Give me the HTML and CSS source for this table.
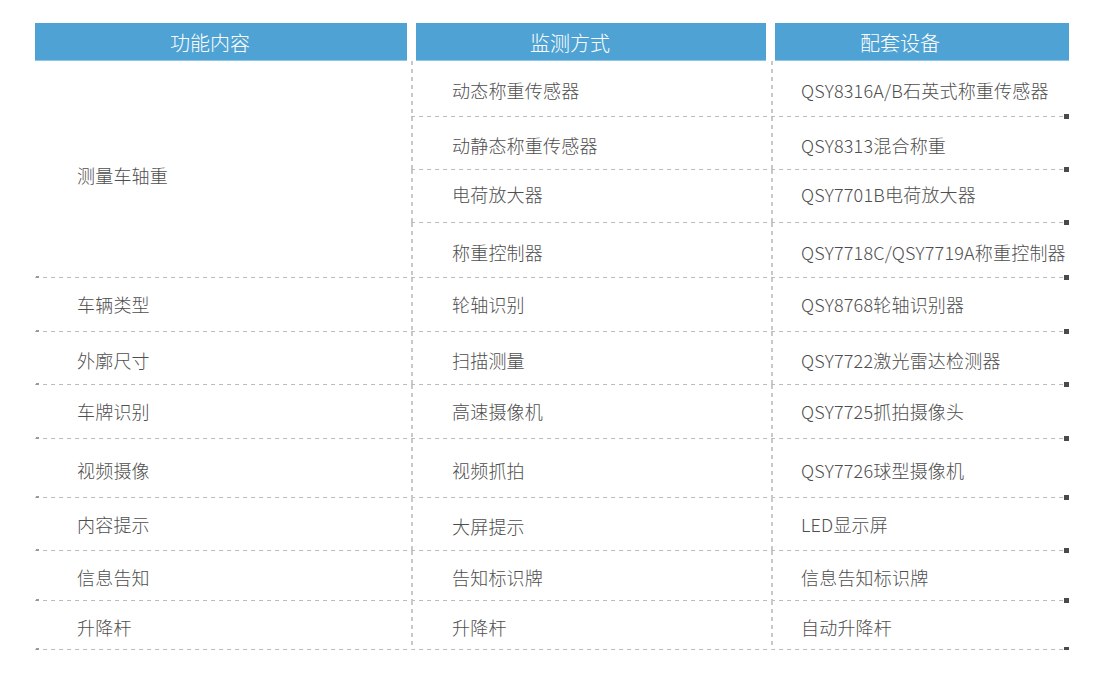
FILE: index.html
```html
<!DOCTYPE html>
<html lang="zh-CN">
<head>
<meta charset="utf-8">
<title>功能内容</title>
<link rel="stylesheet" href="styles.css">
</head>
<body>
<div class="wrap">
  <div class="head">
    <div class="th th1">功能内容</div>
    <div class="th th2">监测方式</div>
    <div class="th th3">配套设备</div>
  </div>
  <div class="grid">
    <div class="c c1 span4">测量车轴重</div>
    <div class="c c2">动态称重传感器</div>
    <div class="c c3">QSY8316A/B石英式称重传感器</div>
    <div class="c c2">动静态称重传感器</div>
    <div class="c c3">QSY8313混合称重</div>
    <div class="c c2 lift4">电荷放大器</div>
    <div class="c c3 lift4">QSY7701B电荷放大器</div>
    <div class="c c2">称重控制器</div>
    <div class="c c3">QSY7718C/QSY7719A称重控制器</div>

    <div class="c c1 lift2">车辆类型</div>
    <div class="c c2 lift2">轮轴识别</div>
    <div class="c c3 lift2">QSY8768轮轴识别器</div>

    <div class="c c1">外廓尺寸</div>
    <div class="c c2">扫描测量</div>
    <div class="c c3">QSY7722激光雷达检测器</div>

    <div class="c c1 lift2">车牌识别</div>
    <div class="c c2 lift2">高速摄像机</div>
    <div class="c c3 lift2">QSY7725抓拍摄像头</div>

    <div class="c c1">视频摄像</div>
    <div class="c c2">视频抓拍</div>
    <div class="c c3">QSY7726球型摄像机</div>

    <div class="c c1 lift2">内容提示</div>
    <div class="c c2">大屏提示</div>
    <div class="c c3 lift2">LED显示屏</div>

    <div class="c c1">信息告知</div>
    <div class="c c2">告知标识牌</div>
    <div class="c c3">信息告知标识牌</div>

    <div class="c c1">升降杆</div>
    <div class="c c2">升降杆</div>
    <div class="c c3">自动升降杆</div>
  </div>
</div>
</body>
</html>
```

FILE: styles.css
```css
html, body {
  margin: 0;
  padding: 0;
  background: #ffffff;
}
body {
  font-family: "Noto Sans CJK SC", "Noto Sans", sans-serif;
}
.wrap {
  width: 1034px;
  margin: 23px 0 0 35px;
}
.head {
  display: flex;
  gap: 9px;
}
.th {
  box-sizing: border-box;
  height: 38px;
  line-height: 38px;
  padding-top: 1px;
  background: #4fa3d4;
  border-bottom: 1px solid #8fc6e6;
  color: #ffffff;
  font-size: 20px;
  font-weight: 300;
  text-align: center;
}
.th1 { width: 372px; padding-right: 22px; }
.th2 { width: 350px; padding-right: 42px; }
.th3 { width: 294px; padding-right: 44px; }

.grid {
  display: grid;
  grid-template-columns: 376px 360px 298px;
  grid-template-rows: 56px 53px 53px 55px 54px 53px 54px 59px 53px 50px 49px;
}
.c {
  position: relative;
  display: flex;
  align-items: center;
  padding-top: 2px;
  box-sizing: border-box;
  font-size: 18px;
  font-weight: 300;
  letter-spacing: 0.2px;
  color: #4e4e4e;
  background-image: repeating-linear-gradient(to right, #bcbcbc 0 4px, transparent 4px 8px);
  background-size: 100% 1px;
  background-position: left bottom;
  background-repeat: no-repeat;
}
.c1 {
  padding-left: 42px;
}
.span4 {
  grid-row: span 4;
  padding-top: 10px;
}
.c1::before {
  content: "";
  position: absolute;
  left: 1px;
  bottom: 0;
  width: 3px;
  height: 2px;
  background: #9a9a9a;
}
.c2, .c3 {
  background-image:
    repeating-linear-gradient(to bottom, #c9c9c9 0 4px, transparent 4px 8px),
    repeating-linear-gradient(to right, #bcbcbc 0 4px, transparent 4px 8px);
  background-size: 2px 100%, 100% 1px;
  background-position: left top, left bottom;
  background-repeat: no-repeat, no-repeat;
}
.c2 {
  padding-left: 41px;
}
.c3 {
  padding-left: 30px;
}
.lift2 {
  padding-top: 0;
  padding-bottom: 2px;
}
.lift4 {
  padding-top: 0;
  padding-bottom: 6px;
}
.c3::after {
  content: "";
  position: absolute;
  right: 0;
  bottom: -2px;
  width: 5px;
  height: 5px;
  background: #4a4a4a;
}
```
